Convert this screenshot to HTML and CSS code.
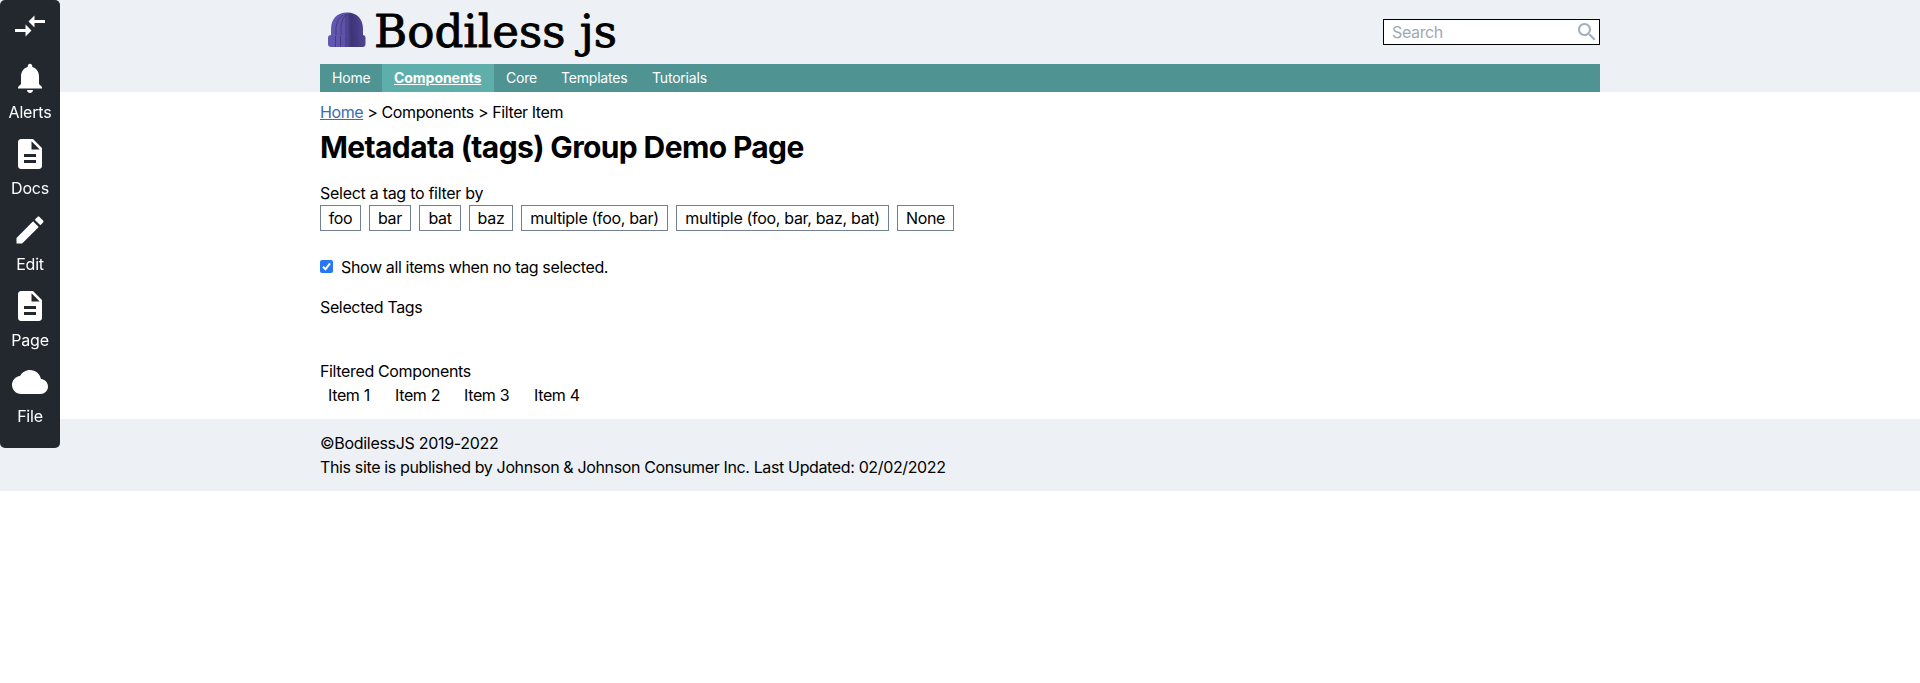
FILE: index.html
```html
<!DOCTYPE html>
<html lang="en">
<head>
<meta charset="utf-8">
<title>Metadata (tags) Group Demo Page</title>
<link rel="stylesheet" href="styles.css">
</head>
<body>
<aside class="toolbar">
  <a class="tool"><svg viewBox="0 0 24 24"><path d="M9.01 14H2v2h7.01v3L13 15l-3.99-4v3zm5.98-1v-3H22V8h-7.01V5L11 9l3.99 4z"/></svg></a>
  <a class="tool"><svg viewBox="0 0 24 24"><path d="M12 22c1.1 0 2-.9 2-2h-4c0 1.1.89 2 2 2zm6-6v-5c0-3.07-1.64-5.64-4.5-6.32V4c0-.83-.67-1.5-1.5-1.5s-1.5.67-1.5 1.5v.68C7.63 5.36 6 7.92 6 11v5l-2 2v1h16v-1l-2-2z"/></svg><span>Alerts</span></a>
  <a class="tool"><svg viewBox="0 0 24 24"><path d="M14 2H6c-1.1 0-1.99.9-1.99 2L4 20c0 1.1.89 2 1.99 2H18c1.1 0 2-.9 2-2V8l-6-6zm2 16H8v-2h8v2zm0-4H8v-2h8v2zm-3-5V3.5L18.5 9H13z"/></svg><span>Docs</span></a>
  <a class="tool"><svg viewBox="0 0 24 24"><path d="M3 17.25V21h3.75L17.81 9.94l-3.75-3.75L3 17.25zM20.71 7.04c.39-.39.39-1.02 0-1.41l-2.34-2.34c-.39-.39-1.02-.39-1.41 0l-1.83 1.83 3.75 3.75 1.83-1.83z"/></svg><span>Edit</span></a>
  <a class="tool"><svg viewBox="0 0 24 24"><path d="M14 2H6c-1.1 0-1.99.9-1.99 2L4 20c0 1.1.89 2 1.99 2H18c1.1 0 2-.9 2-2V8l-6-6zm2 16H8v-2h8v2zm0-4H8v-2h8v2zm-3-5V3.5L18.5 9H13z"/></svg><span>Page</span></a>
  <a class="tool"><svg viewBox="0 0 24 24"><path d="M19.35 10.04C18.67 6.59 15.64 4 12 4 9.11 4 6.6 5.64 5.35 8.04 2.34 8.36 0 10.91 0 14c0 3.31 2.69 6 6 6h13c2.76 0 5-2.24 5-5 0-2.64-2.05-4.78-4.65-4.96z"/></svg><span>File</span></a>
</aside>
<header class="header">
  <div class="container">
    <div class="brand-row">
      <svg class="logo" viewBox="0 0 310 64">
        <defs>
          <linearGradient id="knit">
            <stop offset="0" stop-color="#6359b3"/><stop offset=".45" stop-color="#5c52a8"/><stop offset=".62" stop-color="#3c3475"/><stop offset="1" stop-color="#4f4595"/>
          </linearGradient>
        </defs>
        <path d="M11 37V29C11 19 17 12.500 27 12.500S43 19 43 29V37Z" fill="url(#knit)"/>
        <path d="M16 36V27Q17 19 23 15M21 36V26Q22 18 26 14M26 36V14M31 36V25Q31 18 28 14M36 36V26Q35 18 30 14" fill="none" stroke="#41387c" stroke-width=".9"/>
        <rect x="8" y="35" width="37.500" height="12" rx="3" fill="url(#knit)"/>
        <path d="M15.500 36V47M20.500 36V47M26 36V47M31 36V47M36 36V47" stroke="#41387c" stroke-width=".9"/>
        <text class="wordmark" x="54" y="47" textLength="243" lengthAdjust="spacingAndGlyphs">Bodiless js</text>
      </svg>
      <div class="search"><span>Search</span><svg viewBox="0 0 24 24"><path d="M15.500 14h-.79l-.28-.27C15.410 12.590 16 11.110 16 9.500 16 5.910 13.090 3 9.500 3S3 5.910 3 9.500 5.910 16 9.500 16c1.610 0 3.090-.59 4.230-1.570l.27.28v.79l5 4.990L20.490 19l-4.990-5zm-6 0C7.010 14 5 11.990 5 9.500S7.010 5 9.500 5 14 7.010 14 9.500 11.990 14 9.500 14z"/></svg></div>
    </div>
    <nav class="nav">
      <a class="nav-home">Home</a><a class="nav-active">Components</a><a class="nav-core">Core</a><a class="nav-templates">Templates</a><a>Tutorials</a>
    </nav>
  </div>
</header>
<main class="container main">
  <div class="crumbs"><a>Home</a> &gt; Components &gt; Filter Item</div>
  <h1>Metadata (tags) Group Demo Page</h1>
  <div class="prompt">Select a tag to filter by</div>
  <div class="tags">
    <button>foo</button><button>bar</button><button>bat</button><button>baz</button><button>multiple (foo, bar)</button><button>multiple (foo, bar, baz, bat)</button><button>None</button>
  </div>
  <label class="show-all"><svg viewBox="0 0 13 13"><rect width="13" height="13" rx="2"/><path d="M3 6.800l2.500 2.500L10 3.300"/></svg><span>Show all items when no tag selected.</span></label>
  <div class="selected">Selected Tags</div>
  <div class="filtered">Filtered Components</div>
  <div class="items"><span>Item 1</span><span>Item 2</span><span>Item 3</span><span>Item 4</span></div>
</main>
<footer class="footer">
  <div class="container">
    <div class="copyright">©BodilessJS 2019-2022</div>
    <div class="published">This site is published by Johnson &amp; Johnson Consumer Inc. Last Updated: 02/02/2022</div>
  </div>
</footer>
</body>
</html>
```
FILE: styles.css
```css
* { box-sizing: border-box; }
body {
  margin: 0;
  background: #fff;
  color: #000;
  font: 16px/24px Inter, "Liberation Sans", sans-serif;
  letter-spacing: -0.36px;
}
.container { width: 1280px; margin: 0 auto; }

.toolbar {
  position: fixed;
  top: 0;
  left: 0;
  width: 60px;
  height: 448px;
  padding-top: 8px;
  border-radius: 5px;
  background: #23282f;
  color: #fff;
  letter-spacing: -0.2px;
  display: flex;
  flex-direction: column;
  gap: 12px;
}
.tool { display: flex; flex-direction: column; align-items: center; gap: 4px; }
.tool:first-child { height: 40px; }
.tool svg { width: 36px; height: 36px; fill: #fff; flex: none; }

.header { height: 92px; background: #edf0f5; }
.brand-row { height: 64px; display: flex; justify-content: space-between; align-items: center; }
.logo { width: 310px; height: 64px; }
.wordmark { font: 45px "DejaVu Serif", serif; letter-spacing: 0; stroke: #000; stroke-width: .9px; stroke-linejoin: round; }
.search {
  width: 217px;
  height: 26px;
  padding: 0 0 0 8px;
  border: 1px solid #000;
  background: #fff;
  color: #a0a8b6;
  display: flex;
  justify-content: space-between;
  align-items: center;
}
.search svg { width: 24px; height: 24px; fill: #a0aec0; }
.nav {
  height: 28px;
  display: flex;
  background: #4f9492;
  color: #fff;
  font-size: 14px;
  line-height: 28px;
  letter-spacing: -0.2px;
}
.nav a { padding: 0 12px; white-space: nowrap; }
.nav .nav-home { width: 62px; }
.nav .nav-active { width: 112px; background: #5eafac; font-weight: 700; letter-spacing: -0.04px; text-decoration: underline; }
.nav .nav-core { width: 55px; }
.nav .nav-templates { width: 91px; }

.main { padding-top: 8px; height: 327px; }
.crumbs { letter-spacing: -0.41px; }
.crumbs a { color: #3b6cb4; text-decoration: underline; }
h1 { margin: 5px 0 16px; font-size: 30px; line-height: 36px; font-weight: 700; letter-spacing: -0.63px; }
.prompt { letter-spacing: -0.28px; }
.tags { display: grid; grid-template-columns: 41px 42px 42px 44px 147px 213px 57px; gap: 8px; }
.tags button {
  height: 26px;
  padding: 0;
  border: 1px solid #718096;
  background: #fff;
  color: #000;
  font: inherit;
  letter-spacing: -0.32px;
  white-space: nowrap;
}
.show-all { margin-top: 24px; display: flex; gap: 8px; }
.show-all svg { width: 13px; height: 13px; margin-top: 5px; fill: #2a76f4; }
.show-all path { fill: none; stroke: #fff; stroke-width: 2; }
.selected { margin-top: 16px; }
.filtered { margin-top: 40px; }
.items { padding-left: 8px; display: grid; grid-template-columns: 67px 69px 70px 60px; }

.footer { height: 72px; padding: 12px 0; background: #edf0f5; }
.copyright { letter-spacing: -0.3px; }
```
